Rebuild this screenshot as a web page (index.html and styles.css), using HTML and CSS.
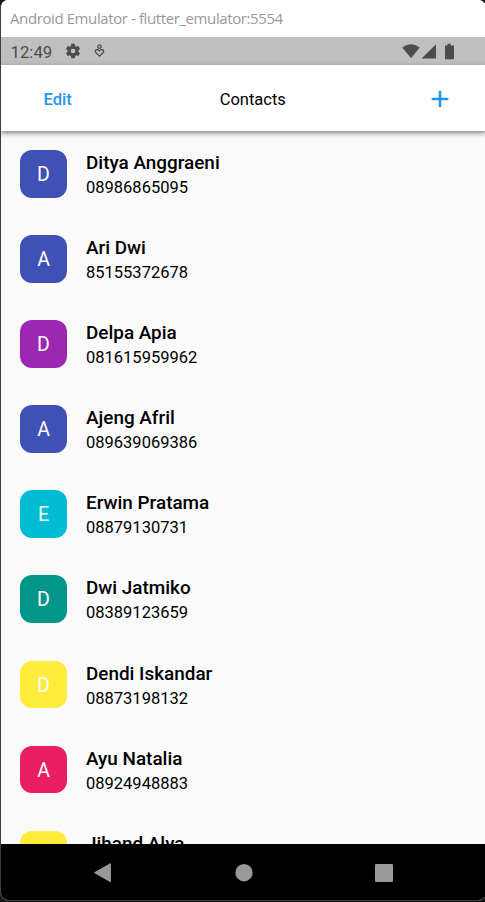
FILE: index.html
```html
<!DOCTYPE html>
<html lang="en">
<head>
<meta charset="utf-8">
<title>Contacts</title>
<link rel="stylesheet" href="styles.css">
</head>
<body>
<div class="window">
  <div class="titlebar">Android Emulator - flutter_emulator:5554</div>
  <div class="status">
    <span class="time">12:49</span>
    <svg class="gear" width="18" height="18" viewBox="0 0 24 24"><path fill="#4c4c4c" d="M19.14 12.94c.04-.3.06-.61.06-.94s-.02-.64-.07-.94l2.03-1.58c.18-.14.23-.41.12-.61l-1.92-3.32c-.12-.22-.37-.29-.59-.22l-2.39.96c-.5-.38-1.03-.7-1.62-.94l-.36-2.54c-.04-.24-.24-.41-.48-.41h-3.84c-.24 0-.43.17-.47.41l-.36 2.54c-.59.24-1.13.57-1.62.94l-2.39-.96c-.22-.08-.47 0-.59.22L2.74 8.87c-.12.21-.08.47.12.61l2.03 1.58c-.05.3-.09.63-.09.94s.02.64.07.94l-2.03 1.58c-.18.14-.23.41-.12.61l1.92 3.32c.12.22.37.29.59.22l2.39-.96c.5.38 1.03.7 1.62.94l.36 2.54c.05.24.24.41.48.41h3.84c.24 0 .44-.17.47-.41l.36-2.54c.59-.24 1.13-.56 1.62-.94l2.39.96c.22.08.47 0 .59-.22l1.92-3.32c.12-.22.07-.47-.12-.61l-2.01-1.58zM12 15.1A3.1 3.1 0 1 1 12 8.9a3.1 3.1 0 0 1 0 6.2z"/></svg>
    <svg class="heart" width="11" height="14" viewBox="0 0 11 14" fill="none" stroke="#4c4c4c" stroke-width="1.3"><circle cx="5.5" cy="2.6" r="1.7"/><path d="M5.5 12.1 2 8.8C.6 7.4 1.5 5.5 3.1 5.5c1 0 1.6.6 2.4 1.4.8-.8 1.4-1.4 2.4-1.4 1.6 0 2.5 1.9 1.1 3.3z"/></svg>
    <svg class="signals" width="54" height="17" viewBox="0 0 54 17" fill="#4c4c4c"><path d="M.3 4.6Q9 -2.1 17.7 4.6L9 15.3z"/><path d="M19.6 15.5 34 1.3v14.2z"/><path d="M43 2.6h2.4V.8h3.4v1.8H52v13.6h-9z"/></svg>
  </div>
  <header class="appbar">
    <span class="edit">Edit</span>
    <span class="heading">Contacts</span>
    <svg class="add" width="18" height="18" viewBox="0 0 18 18"><path d="M9 .7v16.6M.7 9h16.6" stroke="#2196f3" stroke-width="2.5"/></svg>
  </header>
  <main class="list">
    <div class="contact"><div class="avatar indigo">D</div><div><div class="name">Ditya Anggraeni</div><div class="phone">08986865095</div></div></div>
    <div class="contact"><div class="avatar indigo">A</div><div><div class="name">Ari Dwi</div><div class="phone">85155372678</div></div></div>
    <div class="contact"><div class="avatar purple">D</div><div><div class="name">Delpa Apia</div><div class="phone">081615959962</div></div></div>
    <div class="contact"><div class="avatar indigo">A</div><div><div class="name">Ajeng Afril</div><div class="phone">089639069386</div></div></div>
    <div class="contact"><div class="avatar cyan">E</div><div><div class="name">Erwin Pratama</div><div class="phone">08879130731</div></div></div>
    <div class="contact"><div class="avatar teal">D</div><div><div class="name">Dwi Jatmiko</div><div class="phone">08389123659</div></div></div>
    <div class="contact"><div class="avatar yellow">D</div><div><div class="name">Dendi Iskandar</div><div class="phone">08873198132</div></div></div>
    <div class="contact"><div class="avatar pink">A</div><div><div class="name">Ayu Natalia</div><div class="phone">08924948883</div></div></div>
    <div class="contact"><div class="avatar yellow"></div><div><div class="name">Jihand Alya</div></div></div>
  </main>
  <nav class="navbar">
    <svg width="20" height="20" viewBox="0 0 20 20"><path d="M1.6 9.7 17.4 .7v18z" fill="#999" stroke="#999" stroke-linejoin="round"/></svg>
    <svg width="20" height="20" viewBox="0 0 20 20"><circle cx="10" cy="9.7" r="8.7" fill="#999"/></svg>
    <svg width="20" height="20" viewBox="0 0 20 20"><rect x="1" y="1" width="18" height="18" rx="1" fill="#999"/></svg>
  </nav>
</div>
</body>
</html>
```

FILE: styles.css
```css
* { box-sizing: border-box; }
body {
  margin: 0;
  height: 902px;
  overflow: hidden;
  background: #151515;
  font-family: Roboto, sans-serif;
  color: #000;
}
.window {
  display: flex;
  flex-direction: column;
  width: 486px;
  height: 901px;
  border-left: 1px solid #3d3d3f;
  border-bottom: 1px solid #3d3d3f;
  border-radius: 8px;
  overflow: hidden;
  background: #fafafa;
}
.titlebar {
  flex: none;
  height: 37px;
  padding-left: 9px;
  background: #fff;
  color: #999;
  font: 15px/37px "Open Sans", sans-serif;
  letter-spacing: -0.4px;
  white-space: nowrap;
}
.status {
  flex: none;
  display: flex;
  align-items: center;
  height: 28px;
  padding: 0 30px 0 9.5px;
  background: #bfbfbf;
  color: #4c4c4c;
}
.time { width: 53.5px; font-size: 16.8px; line-height: 28px; padding-top: 1px; }
.heart { margin-left: 12px; }
.signals { margin-left: auto; }
.appbar {
  flex: none;
  position: relative;
  display: grid;
  grid-template-columns: 1fr auto 1fr;
  align-items: center;
  height: 66px;
  padding: 1px 37px 0 42.5px;
  background: #fff;
  box-shadow: 0 2px 5px rgba(0, 0, 0, .5);
  font-size: 16.5px;
}
.edit, .heading { padding-top: 1px; }
.heading { margin: 0 -6.5px 0 6.5px; }
.edit { color: #2196f3; font-weight: 500; }
.add { justify-self: end; }
.list {
  flex: 1;
  min-height: 0;
  overflow: hidden;
  padding: 19.25px 0 0 19px;
}
.contact {
  display: flex;
  gap: 19px;
  height: 85.05px;
}
.avatar {
  width: 47px;
  height: 47.4px;
  border-radius: 12px;
  color: #fff;
  font-size: 19.5px;
  line-height: 49px;
  text-align: center;
}
.indigo { background: #3f51b5; }
.purple { background: #9c27b0; }
.cyan { background: #00bcd4; }
.teal { background: #009688; }
.yellow { background: #ffeb3b; }
.pink { background: #e91e63; }
.name { font-size: 18.9px; font-weight: 500; line-height: 26px; }
.phone { font-size: 16.5px; line-height: 23px; }
.navbar {
  flex: none;
  display: flex;
  justify-content: space-between;
  align-items: center;
  height: 56px;
  padding: 1px 92px 0 92px;
  background: #000;
}
```
